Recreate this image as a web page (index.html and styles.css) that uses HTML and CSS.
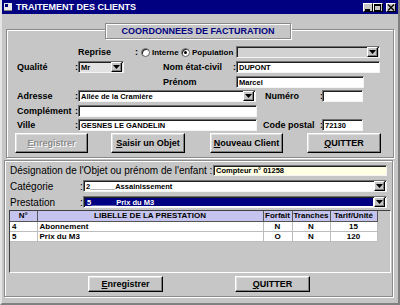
FILE: index.html
```html
<!DOCTYPE html>
<html lang="fr">
<head>
<meta charset="utf-8">
<title>Traitement des clients</title>
<link rel="stylesheet" href="styles.css">
</head>
<body>
<div class="window">
  <div class="titlebar">
    <svg class="appicon" width="8" height="8" viewBox="0 0 8 8"><rect x="0" y="0" width="8" height="8" fill="#e8e8e8"/><rect x="1" y="1" width="3" height="3" fill="#000080"/><rect x="0" y="7" width="8" height="1" fill="#808080"/></svg>
    <span class="title">TRAITEMENT DES CLIENTS</span>
    <div class="winbtns">
      <span class="wb"><svg width="8" height="7" viewBox="0 0 8 7"><rect x="1" y="5" width="5" height="2" fill="#000"/></svg></span>
      <span class="wb"><svg width="8" height="7" viewBox="0 0 8 7"><rect x="0.5" y="0.5" width="6" height="6" fill="none" stroke="#000"/><rect x="0" y="0" width="7" height="2" fill="#000"/></svg></span>
      <span class="wb close"><svg width="8" height="7" viewBox="0 0 8 7"><path d="M1 0.5 L7 6.5 M7 0.5 L1 6.5" stroke="#000" stroke-width="1.4"/></svg></span>
    </div>
  </div>

  <div class="group g1">
    <div class="gtitle">COORDONNEES DE FACTURATION</div>

    <div class="row r1">
      <span class="lbl l-reprise">Reprise</span>
      <span class="colon c4">:</span>
      <span class="radio"></span>
      <span class="rlbl rl1">Interne</span>
      <span class="radio on"><i></i></span>
      <span class="rlbl rl2">Population</span>
      <span class="field combo grey w144"><span class="arrow"><svg width="7" height="4" viewBox="0 0 7 4"><path d="M0 0 H7 L3.5 4 Z" fill="#000"/></svg></span></span>
    </div>

    <div class="row r2">
      <span class="lbl l-left">Qualité</span>
      <span class="colon">:</span>
      <span class="field combo light w46">Mr<span class="arrow"><svg width="7" height="4" viewBox="0 0 7 4"><path d="M0 0 H7 L3.5 4 Z" fill="#000"/></svg></span></span>
      <span class="lbl l-nom">Nom état-civil</span>
      <span class="colon">:</span>
      <span class="field w144">DUPONT</span>
    </div>

    <div class="row r3">
      <span class="lbl l-prenom">Prénom</span>
      <span class="field w128">Marcel</span>
    </div>

    <div class="row r4">
      <span class="lbl l-left">Adresse</span>
      <span class="colon">:</span>
      <span class="field combo w178">Allée de la Cramière<span class="arrow"><svg width="7" height="4" viewBox="0 0 7 4"><path d="M0 0 H7 L3.5 4 Z" fill="#000"/></svg></span></span>
      <span class="lbl l-numero">Numéro</span>
      <span class="colon c2">:</span>
      <span class="field w41"></span>
    </div>

    <div class="row r5">
      <span class="lbl l-left">Complément</span>
      <span class="colon">:</span>
      <span class="field w179"></span>
    </div>

    <div class="row r6">
      <span class="lbl l-left">Ville</span>
      <span class="colon">:</span>
      <span class="field w179">GESNES LE GANDELIN</span>
      <span class="lbl l-cp">Code postal</span>
      <span class="colon c2">:</span>
      <span class="field w41">72130</span>
    </div>

    <div class="row btnrow">
      <span class="btn disabled b1"><u>E</u>nregistrer</span>
      <span class="btn b2"><u>S</u>aisir un Objet</span>
      <span class="btn b3"><u>N</u>ouveau Client</span>
      <span class="btn b4"><u>Q</u>UITTER</span>
    </div>
  </div>

  <div class="group g2">
    <div class="row2 rd">
      <span class="lbl2 l-desig">Désignation de l'Objet ou prénom de l'enfant :</span>
      <span class="field yellow w174">Compteur n° 01258</span>
    </div>
    <div class="row2 rc">
      <span class="lbl2 l-cat">Catégorie</span>
      <span class="colon2">:</span>
      <span class="field combo w304">2______Assainissement<span class="arrow"><svg width="7" height="4" viewBox="0 0 7 4"><path d="M0 0 H7 L3.5 4 Z" fill="#000"/></svg></span></span>
    </div>
    <div class="row2 rp">
      <span class="lbl2 l-cat">Prestation</span>
      <span class="colon2">:</span>
      <span class="field combo selected w304"><span class="sel">5______Prix du M3</span><span class="arrow"><svg width="7" height="4" viewBox="0 0 7 4"><path d="M0 0 H7 L3.5 4 Z" fill="#000"/></svg></span></span>
    </div>

    <div class="tablebox">
      <table class="grid">
        <colgroup>
          <col class="c-n"><col class="c-lib"><col class="c-f"><col class="c-t"><col class="c-u">
        </colgroup>
        <thead>
          <tr><th>N°</th><th>LIBELLE DE LA PRESTATION</th><th>Forfait</th><th>Tranches</th><th>Tarif/Unité</th></tr>
        </thead>
        <tbody>
          <tr><td class="l">4</td><td class="l">Abonnement</td><td>N</td><td>N</td><td>15</td></tr>
          <tr><td class="l">5</td><td class="l">Prix du M3</td><td>O</td><td>N</td><td>120</td></tr>
        </tbody>
      </table>
    </div>

    <div class="row2 bottombtns">
      <span class="btn small bb1"><u>E</u>nregistrer</span>
      <span class="btn small bb2"><u>Q</u>UITTER</span>
    </div>
  </div>
</div>
</body>
</html>
```

FILE: styles.css
```css
* { box-sizing: border-box; }

body {
  margin: 0;
  background: #c6c6c6;
  font-family: "Liberation Sans", Arial, sans-serif;
  color: #000;
}

.window {
  width: 400px;
  height: 305px;
  background: #c6c6c6;
  border-left: 2px solid #e4e4e4;
  border-right: 2px solid #808080;
  border-bottom: 2px solid #808080;
  display: flex;
  flex-direction: column;
  overflow: hidden;
}

/* ---------- title bar ---------- */
.titlebar {
  height: 14px;
  flex: none;
  background: #000080;
  display: flex;
  align-items: center;
  color: #fff;
}
.appicon { margin-left: 2px; flex: none; }
.title {
  margin-left: 4px;
  font-size: 9px;
  font-weight: bold;
  white-space: nowrap;
}
.winbtns {
  margin-left: auto;
  margin-right: 2px;
  display: flex;
  align-items: center;
}
.wb {
  width: 10px;
  height: 9px;
  background: #c6c6c6;
  border: 1px solid;
  border-color: #fff #000 #000 #fff;
  display: flex;
  align-items: center;
  justify-content: center;
}
.wb svg { display: block; }
.wb.close { margin-left: 3px; }

/* ---------- group boxes ---------- */
.group {
  border: 1px solid #8a8a8a;
  box-shadow: inset 1px 1px 0 #fff, 1px 1px 0 #fff;
  display: flex;
  flex-direction: column;
  flex: none;
}
.g1 {
  margin: 15px 0 0 4px;
  width: 388px;
  height: 129px;
}
.g2 {
  margin: 2px 0 0 2px;
  width: 389px;
  height: 137px;
}

.gtitle {
  margin: -7px 0 0 98px;
  width: 186px;
  height: 16px;
  flex: none;
  border: 1px solid #8a8a8a;
  box-shadow: inset 1px 1px 0 #fff, 1px 1px 0 #fff;
  background: #c6c6c6;
  color: #000080;
  font-size: 9px;
  font-weight: bold;
  display: flex;
  align-items: center;
  justify-content: center;
  white-space: nowrap;
}

/* ---------- rows ---------- */
.row {
  display: flex;
  align-items: center;
  height: 14px;
  flex: none;
}
.r1 { margin-top: 6px; }
.r2 { margin-top: 1px; }
.r3 { margin-top: 1px; }
.r4 { margin-top: 0; }
.r5 { margin-top: 1px; }
.r6 { margin-top: 0; }
.btnrow { margin-top: 1px; height: 20px; }

.lbl {
  font-size: 9px;
  font-weight: bold;
  white-space: nowrap;
  flex: none;
}
.colon {
  font-size: 9px;
  font-weight: bold;
  width: 3px;
  flex: none;
}
.colon.c4 { width: 4px; }
.colon.c2 { width: 2px; }

.l-reprise { margin-left: 71px; width: 57px; }
.l-left { margin-left: 10px; width: 58px; }
.l-nom { margin-left: 39px; width: 70px; }
.l-prenom { margin-left: 156px; width: 73px; }
.l-numero { margin-left: 9px; width: 55px; }
.l-cp { margin-left: 6px; width: 57px; }

.radio {
  width: 9px;
  height: 9px;
  flex: none;
  border-radius: 50%;
  background: #fff;
  border: 1px solid #606060;
  box-shadow: inset 1px 1px 0 #202020;
  margin-left: 2px;
  display: flex;
  align-items: center;
  justify-content: center;
}
.radio.on { margin-left: 1px; }
.radio i {
  width: 3px;
  height: 3px;
  border-radius: 50%;
  background: #000;
  display: block;
}
.rlbl {
  font-size: 8px;
  font-weight: bold;
  white-space: nowrap;
  flex: none;
}
.rl1 { margin-left: 2px; width: 28px; }
.rl2 { margin-left: 2px; width: 44px; }

/* ---------- fields ---------- */
.field {
  height: 12px;
  flex: none;
  background: #fff;
  border: 1px solid;
  border-color: #707070 #f4f4f4 #f4f4f4 #707070;
  box-shadow: inset 1px 1px 0 #202020;
  font-size: 7.5px;
  font-weight: bold;
  display: flex;
  align-items: center;
  padding-left: 2px;
  white-space: nowrap;
  overflow: hidden;
}
.field.grey { background: #d2d2d2; }
.field.light { background: #e2e2e2; }
.field.yellow { background: #ffffe4; }

.w41 { width: 41px; }
.w46 { width: 46px; }
.w128 { width: 128px; }
.w144 { width: 144px; }
.w174 { width: 174px; }
.w178 { width: 178px; }
.w179 { width: 179px; }
.w304 { width: 304px; }

.combo { padding-right: 1px; }
.arrow {
  margin-left: auto;
  width: 11px;
  height: 10px;
  flex: none;
  background: #c6c6c6;
  border: 1px solid;
  border-color: #fff #000 #000 #fff;
  box-shadow: inset -1px -1px 0 #808080;
  display: flex;
  align-items: center;
  justify-content: center;
}
.arrow svg { display: block; }

.combo.selected { padding-left: 1px; }
.combo.selected .sel {
  flex: 1;
  height: 8px;
  background: #000080;
  color: #fff;
  display: flex;
  align-items: center;
  padding-left: 2px;
  margin-right: 1px;
}

/* ---------- buttons ---------- */
.btn {
  height: 20px;
  flex: none;
  background: #c6c6c6;
  border: 1px solid;
  border-color: #fff #000 #000 #fff;
  box-shadow: inset -1px -1px 0 #808080, inset 1px 1px 0 #e0e0e0;
  font-size: 9px;
  font-weight: bold;
  display: flex;
  align-items: center;
  justify-content: center;
  white-space: nowrap;
}
.btn.disabled { color: #8a8a8a; text-shadow: 1px 1px 0 #fff; }
.b1 { margin-left: 8px; width: 73px; }
.b2 { margin-left: 23px; width: 74px; }
.b3 { margin-left: 25px; width: 73px; }
.b4 { margin-left: 24px; width: 74px; }

/* ---------- lower group ---------- */
.row2 {
  display: flex;
  align-items: center;
  height: 12px;
  flex: none;
}
.rd { margin-top: 3px; }
.rd .field { height: 11px; }
.rc { margin-top: 4px; }
.rp { margin-top: 4px; }

.lbl2 {
  font-size: 10px;
  white-space: nowrap;
  flex: none;
}
.l-desig { margin-left: 5px; width: 203px; }
.l-cat { margin-left: 5px; width: 70px; }
.colon2 { font-size: 10px; width: 3px; flex: none; }

.tablebox {
  margin: 2px 0 0 4px;
  width: 382px;
  height: 63px;
  flex: none;
  border: 1px solid;
  border-color: #404040 #fff #fff #404040;
  background: #c6c6c6;
}
.grid {
  border-collapse: collapse;
  table-layout: fixed;
  width: 367px;
  font-size: 8px;
  font-weight: bold;
}
.c-n { width: 27px; }
.c-lib { width: 226px; }
.c-f { width: 29px; }
.c-t { width: 38px; }
.c-u { width: 47px; }
.grid th {
  height: 10px;
  padding: 0;
  line-height: 9px;
  background: #c4c4ee;
  border-right: 1px solid #555;
  border-bottom: 1px solid #555;
  white-space: nowrap;
  overflow: hidden;
}
.grid td {
  height: 10px;
  padding: 0;
  line-height: 9px;
  background: #fff;
  border-right: 1px solid #bdbdbd;
  border-bottom: 1px solid #bdbdbd;
  text-align: center;
  white-space: nowrap;
}
.grid td.l { text-align: left; padding-left: 2px; }

.bottombtns { margin-top: 3px; height: 16px; }
.btn.small { height: 16px; }
.bb1 { margin-left: 83px; width: 75px; }
.bb2 { margin-left: 72px; width: 75px; }
```
